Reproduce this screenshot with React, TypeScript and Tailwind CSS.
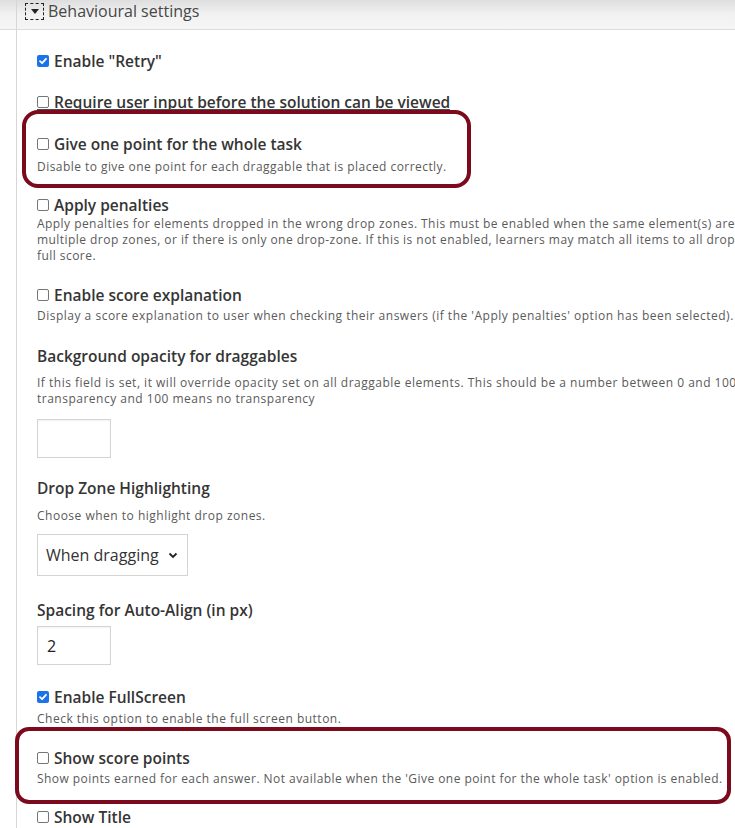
import React from 'react'

const font = { fontFamily: '"Open Sans", "Noto Sans", sans-serif' }

function Box({ checked }: { checked?: boolean }) {
  if (checked) {
    return (
      <span className="inline-flex h-[12px] w-[12px] shrink-0 items-center justify-center rounded-[2px] bg-[#1a73e8]">
        <svg width="10" height="10" viewBox="0 0 10 10">
          <path d="M2 5.2 L4.1 7.2 L8 2.8" fill="none" stroke="#fff" strokeWidth="1.8" strokeLinecap="round" strokeLinejoin="round" />
        </svg>
      </span>
    )
  }
  return <span className="inline-block h-[12px] w-[12px] shrink-0 rounded-[2px] border border-[#767676] bg-white" />
}

function CheckLabel({ text, checked }: { text: string; checked?: boolean }) {
  return (
    <div className="flex h-[20px] items-center gap-[5px] text-[15.5px] font-semibold leading-[20px] text-[#353535]">
      <Box checked={checked} />
      <span className="whitespace-nowrap">{text}</span>
    </div>
  )
}

function Title({ text }: { text: string }) {
  return <div className="h-[20px] whitespace-nowrap text-[15.5px] font-semibold leading-[20px] text-[#353535]">{text}</div>
}

function Desc({ children, className = '' }: { children: React.ReactNode; className?: string }) {
  return <div className={`whitespace-nowrap text-[12px] leading-[16px] text-[#5a5a5a] ${className}`}>{children}</div>
}

export default function App() {
  return (
    <div className="relative h-[828px] w-[735px] overflow-hidden bg-white" style={font}>
      {/* section header */}
      <div className="flex h-[30px] items-start border-b border-[#dcdcdc] bg-gradient-to-b from-[#dedede] via-[#f2f2f2] to-[#f5f5f5]">
        <div className="ml-[16px] flex h-full items-start border-l border-[#d6d6d6] pl-[8px] pt-[1px]">
          <span className="mt-[2px] flex h-[17px] w-[19px] items-center justify-center border border-dashed border-[#222]">
            <svg width="8" height="5" viewBox="0 0 8 5">
              <path d="M0 0 H8 L4 5 Z" fill="#222" />
            </svg>
          </span>
          <span className="ml-[4px] text-[16px] leading-[20px] text-[#474747]">Behavioural settings</span>
        </div>
      </div>

      <div className="ml-[16px] h-[798px] border-l border-[#d6d6d6] pl-[20px]">
        <div className="pt-[21px]">
          <CheckLabel text={'Enable "Retry"'} checked />
        </div>

        <div className="mt-[21px] h-[19px] w-fit overflow-hidden border-b-2 border-[#4a4a4a]">
          <CheckLabel text="Require user input before the solution can be viewed" />
        </div>

        <div className="mt-[23px]">
          <CheckLabel text="Give one point for the whole task" />
          <Desc className="mt-[5px] tracking-[0.45px]">Disable to give one point for each draggable that is placed correctly.</Desc>
        </div>

        <div className="mt-[20px]">
          <CheckLabel text="Apply penalties" />
          <Desc className="mt-[1px] tracking-[0.45px]">
            Apply penalties for elements dropped in the wrong drop zones. This must be enabled when the same element(s) are placed in
            <br />
            multiple drop zones, or if there is only one drop-zone. If this is not enabled, learners may match all items to all drop zones and get a
            <br />
            full score.
          </Desc>
        </div>

        <div className="mt-[21px]">
          <CheckLabel text="Enable score explanation" />
          <Desc className="mt-[3px] tracking-[0.5px]">
            Display a score explanation to user when checking their answers (if the 'Apply penalties' option has been selected).
          </Desc>
        </div>

        <div className="mt-[22px]">
          <Title text="Background opacity for draggables" />
          <Desc className="mt-[9px] leading-[15px] tracking-[0.5px]">
            If this field is set, it will override opacity set on all draggable elements. This should be a number between 0 and 100, where 0 means full
            <br />
            transparency and 100 means no transparency
          </Desc>
          <div className="mt-[12px] h-[39px] w-[74px] border border-[#d4d4d4] bg-white shadow-[inset_0_1px_2px_rgba(0,0,0,0.06)]" />
        </div>

        <div className="mt-[20px]">
          <Title text="Drop Zone Highlighting" />
          <Desc className="mt-[10px] tracking-[0.5px]">Choose when to highlight drop zones.</Desc>
          <div className="mt-[10px] flex h-[42px] w-[151px] items-center border border-[#d4d4d4] bg-white pl-[8px] text-[16px] text-[#333]">
            <span>When dragging</span>
            <svg className="ml-[9px]" width="10" height="7" viewBox="0 0 10 7">
              <path d="M1.5 1.5 L5 5 L8.5 1.5" fill="none" stroke="#222" strokeWidth="1.8" />
            </svg>
          </div>
        </div>

        <div className="mt-[24px]">
          <Title text="Spacing for Auto-Align (in px)" />
          <div className="mt-[6px] flex h-[39px] w-[74px] items-center border border-[#d4d4d4] bg-white pl-[9px] text-[16px] text-[#222] shadow-[inset_0_1px_2px_rgba(0,0,0,0.06)]">
            2
          </div>
        </div>

        <div className="mt-[22px]">
          <CheckLabel text="Enable FullScreen" checked />
          <Desc className="mt-[4px] tracking-[0.5px]">Check this option to enable the full screen button.</Desc>
        </div>

        <div className="mt-[21px]">
          <CheckLabel text="Show score points" />
          <Desc className="mt-[3px] tracking-[0.45px]">
            Show points earned for each answer. Not available when the 'Give one point for the whole task' option is enabled.
          </Desc>
        </div>

        <div className="mt-[20px]">
          <CheckLabel text="Show Title" />
        </div>
      </div>

      {/* annotation outlines */}
      <div className="pointer-events-none absolute left-[22px] top-[110px] h-[78px] w-[449px] rounded-[16px] border-[4px] border-[#7c0a1d]" />
      <div className="pointer-events-none absolute left-[15px] top-[727px] h-[77px] w-[716px] rounded-[14px] border-[4px] border-[#7c0a1d]" />
    </div>
  )
}
